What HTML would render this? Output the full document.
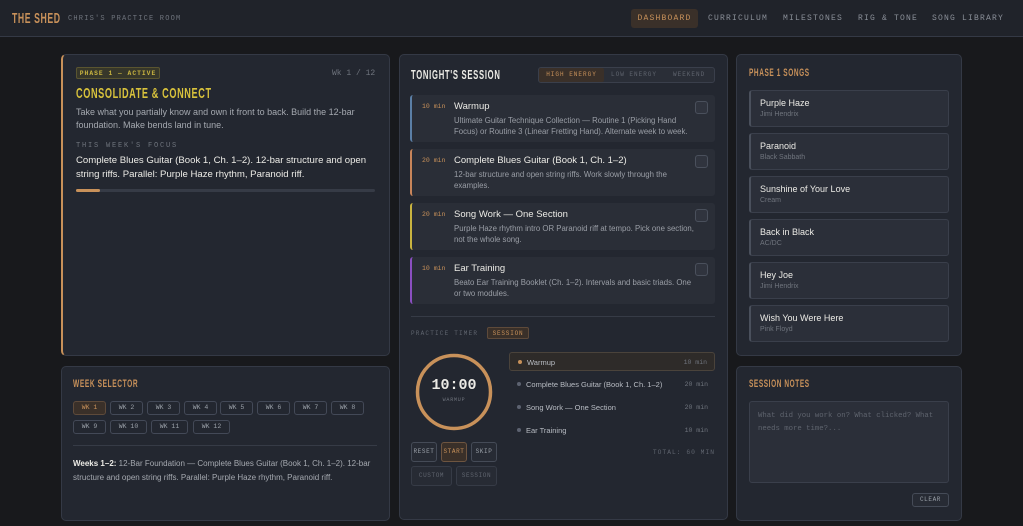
<!DOCTYPE html>
<html><head><meta charset="utf-8"><style>
*{box-sizing:border-box;margin:0;padding:0}
body{width:1023px;height:526px;background:#18191c;font-family:"Liberation Sans",sans-serif;position:relative;overflow:hidden;color:#e8e6e0}
.a{position:absolute}
.mono{font-family:"Liberation Mono",monospace}
.cond{font-family:"Liberation Sans",sans-serif;font-weight:bold;letter-spacing:.6px;transform:scaleX(.6);transform-origin:0 0;white-space:nowrap}
.card{position:absolute;background:#232730;border:1px solid #343945;border-radius:5px}
.hdr{position:absolute;left:0;top:0;width:1023px;height:37px;background:#20232a;border-bottom:1px solid #343945}
.nav{position:absolute;top:9px;height:19px;line-height:19px;font-size:8px;letter-spacing:1.2px;color:#8a8f98;font-family:"Liberation Mono",monospace}
.item{position:absolute;left:410px;width:305px;height:47px;background:#2a2e37;border-radius:3px}
.item .t{position:absolute;left:42px;top:6px;font-size:9.5px;color:#ecebe6}
.item .m{position:absolute;left:10px;top:8px;font-size:6.5px;color:#c8915a;font-family:"Liberation Mono",monospace}
.item .d{position:absolute;left:42px;top:20px;width:240px;font-size:7.8px;line-height:11px;color:#9a9ea6}
.item .c{position:absolute;left:283px;top:6px;width:13px;height:13px;border:1px solid #4a505c;border-radius:3px;background:#30343e}
.wk{position:absolute;height:14px;line-height:12px;border:1px solid #434957;border-radius:3px;font-size:6.5px;color:#9aa0a8;text-align:center;font-family:"Liberation Mono",monospace}
.song{position:absolute;left:749px;width:200px;height:37px;background:#2b2f39;border:1px solid #3a3f4b;border-left:2px solid #4a505c;border-radius:3px}
.song .n{position:absolute;left:9px;top:7px;font-size:9px;color:#ecebe6}
.song .r{position:absolute;left:9px;top:20px;font-size:7px;color:#6f747d}
.btn{position:absolute;border:1px solid #454b57;border-radius:3px;font-size:6px;letter-spacing:.6px;color:#9aa0a8;text-align:center;font-family:"Liberation Mono",monospace;background:#272b34}
.li{position:absolute;left:509px;width:206px;height:19px;font-size:7.5px;color:#b8bcc3}
.li .dot{position:absolute;left:8px;top:7px;width:4px;height:4px;border-radius:2px;background:#5c6270}
.li .x{position:absolute;left:17px;top:5px}
.li .mm{position:absolute;right:7px;top:6px;font-size:6.5px;color:#6f747d;font-family:"Liberation Mono",monospace}
</style></head><body>
<div class="hdr">
 <div class="a cond" style="left:12px;top:10px;font-size:15px;color:#c8915a;letter-spacing:1px;transform:scaleX(.58)">THE SHED</div>
 <div class="a mono" style="left:68px;top:15px;font-size:7px;color:#6f747d;letter-spacing:1.2px">CHRIS'S PRACTICE ROOM</div>
 <div class="nav" style="left:631px;width:67px;background:#3a3029;border-radius:3px;color:#c8915a;text-align:center">DASHBOARD</div>
 <div class="nav" style="left:708px">CURRICULUM</div>
 <div class="nav" style="left:783px">MILESTONES</div>
 <div class="nav" style="left:858px">RIG &amp; TONE</div>
 <div class="nav" style="left:932px">SONG LIBRARY</div>
</div>

<!-- card 1 -->
<div class="card" style="left:61px;top:54px;width:329px;height:302px;border-left:2px solid #c8915a"></div>
<div class="a mono" style="left:76px;top:67px;width:84px;height:12px;line-height:11px;background:#37372a;border:1px solid #5a5530;border-radius:2px;font-size:6.3px;color:#c9b440;letter-spacing:1px;text-align:center;font-weight:bold">PHASE 1 — ACTIVE</div>
<div class="a mono" style="left:332px;top:69px;font-size:8px;color:#6f747d">Wk 1 / 12</div>
<div class="a cond" style="left:76px;top:85px;font-size:15px;color:#d8c23c;letter-spacing:1px;transform:scaleX(.61)">CONSOLIDATE &amp; CONNECT</div>
<div class="a" style="left:76px;top:106px;width:305px;font-size:9px;line-height:13px;color:#a5a9b0">Take what you partially know and own it front to back. Build the 12-bar foundation. Make bends land in tune.</div>
<div class="a mono" style="left:76px;top:142px;font-size:7px;color:#6f747d;letter-spacing:1.8px">THIS WEEK'S FOCUS</div>
<div class="a" style="left:76px;top:154px;width:305px;font-size:9.6px;line-height:14px;color:#ecebe6">Complete Blues Guitar (Book 1, Ch. 1–2). 12-bar structure and open string riffs. Parallel: Purple Haze rhythm, Paranoid riff.</div>
<div class="a" style="left:76px;top:189px;width:299px;height:3px;background:#363b46;border-radius:2px"></div>
<div class="a" style="left:76px;top:189px;width:24px;height:3px;background:#c8915a;border-radius:2px"></div>

<!-- week selector -->
<div class="card" style="left:61px;top:366px;width:329px;height:155px"></div>
<div class="a cond" style="left:73px;top:378px;font-size:11px;color:#c8915a;letter-spacing:1px;transform:scaleX(.6)">WEEK SELECTOR</div>
<div class="wk" style="left:73px;top:401px;width:33px;background:#3a3029;border-color:#5e4a3a;color:#c8915a">WK 1</div>
<div class="wk" style="left:110px;top:401px;width:33px">WK 2</div>
<div class="wk" style="left:147px;top:401px;width:33px">WK 3</div>
<div class="wk" style="left:184px;top:401px;width:33px">WK 4</div>
<div class="wk" style="left:220px;top:401px;width:33px">WK 5</div>
<div class="wk" style="left:257px;top:401px;width:33px">WK 6</div>
<div class="wk" style="left:294px;top:401px;width:33px">WK 7</div>
<div class="wk" style="left:331px;top:401px;width:33px">WK 8</div>
<div class="wk" style="left:73px;top:420px;width:33px">WK 9</div>
<div class="wk" style="left:110px;top:420px;width:37px">WK 10</div>
<div class="wk" style="left:151px;top:420px;width:37px">WK 11</div>
<div class="wk" style="left:193px;top:420px;width:37px">WK 12</div>
<div class="a" style="left:73px;top:445px;width:304px;height:1px;background:#363b46"></div>
<div class="a" style="left:73px;top:457px;width:305px;font-size:8px;line-height:13.5px;color:#a5a9b0"><b style="color:#ecebe6">Weeks 1–2:</b> 12-Bar Foundation — Complete Blues Guitar (Book 1, Ch. 1–2). 12-bar structure and open string riffs. Parallel: Purple Haze rhythm, Paranoid riff.</div>

<!-- middle -->
<div class="card" style="left:399px;top:54px;width:329px;height:466px"></div>
<div class="a cond" style="left:411px;top:67px;font-size:13px;color:#ecebe6;letter-spacing:1.2px;transform:scaleX(.59)">TONIGHT'S SESSION</div>
<div class="a" style="left:538px;top:67px;width:177px;height:16px;background:#2a2e37;border:1px solid #3a3f4b;border-radius:3px"></div>
<div class="a mono" style="left:539px;top:68px;width:65px;height:14px;line-height:14px;background:#3a3029;color:#c8915a;font-size:6px;letter-spacing:1px;text-align:center;border-radius:2px">HIGH ENERGY</div>
<div class="a mono" style="left:611px;top:71px;font-size:6px;color:#5f646e;letter-spacing:1px">LOW ENERGY</div>
<div class="a mono" style="left:673px;top:71px;font-size:6px;color:#5f646e;letter-spacing:1px">WEEKEND</div>

<div class="item" style="top:95px;border-left:2px solid #5b7fa6"><div class="m">10 min</div><div class="t">Warmup</div><div class="d">Ultimate Guitar Technique Collection — Routine 1 (Picking Hand Focus) or Routine 3 (Linear Fretting Hand). Alternate week to week.</div><div class="c"></div></div>
<div class="item" style="top:149px;border-left:2px solid #c8855a"><div class="m">20 min</div><div class="t">Complete Blues Guitar (Book 1, Ch. 1–2)</div><div class="d">12-bar structure and open string riffs. Work slowly through the examples.</div><div class="c"></div></div>
<div class="item" style="top:203px;border-left:2px solid #c9b440"><div class="m">20 min</div><div class="t">Song Work — One Section</div><div class="d">Purple Haze rhythm intro OR Paranoid riff at tempo. Pick one section, not the whole song.</div><div class="c"></div></div>
<div class="item" style="top:257px;border-left:2px solid #8a4fc0"><div class="m">10 min</div><div class="t">Ear Training</div><div class="d">Beato Ear Training Booklet (Ch. 1–2). Intervals and basic triads. One or two modules.</div><div class="c"></div></div>

<div class="a" style="left:411px;top:316px;width:304px;height:1px;background:#363b46"></div>
<div class="a mono" style="left:411px;top:330px;font-size:6px;color:#5f646e;letter-spacing:1.2px">PRACTICE TIMER</div>
<div class="a mono" style="left:487px;top:327px;width:42px;height:12px;line-height:11px;background:#3a3029;border:1px solid #5e4a3a;border-radius:2px;font-size:6px;color:#c8915a;letter-spacing:.8px;text-align:center">SESSION</div>
<svg class="a" style="left:415px;top:353px" width="78" height="78"><circle cx="39" cy="39" r="36.5" fill="none" stroke="#c8915a" stroke-width="3.5"/></svg>
<div class="a mono" style="left:415px;top:377px;width:78px;text-align:center;font-size:15px;font-weight:bold;color:#ecebe6">10:00</div>
<div class="a mono" style="left:415px;top:397px;width:78px;text-align:center;font-size:5px;color:#6f747d;letter-spacing:.8px">WARMUP</div>
<div class="btn" style="left:411px;top:442px;width:26px;height:20px;line-height:18px">RESET</div>
<div class="btn" style="left:441px;top:442px;width:26px;height:20px;line-height:18px;background:#3a3029;border-color:#6e5540;color:#c8915a">START</div>
<div class="btn" style="left:471px;top:442px;width:26px;height:20px;line-height:18px">SKIP</div>
<div class="btn" style="left:411px;top:466px;width:41px;height:20px;line-height:18px;color:#5f646e;border-color:#363b46">CUSTOM</div>
<div class="btn" style="left:456px;top:466px;width:41px;height:20px;line-height:18px;color:#5f646e;border-color:#363b46">SESSION</div>

<div class="li" style="top:352px;background:#2e2b29;border:1px solid #4a433b;border-radius:3px"><div class="dot" style="background:#c8915a"></div><div class="x">Warmup</div><div class="mm">10 min</div></div>
<div class="li" style="top:375px"><div class="dot"></div><div class="x">Complete Blues Guitar (Book 1, Ch. 1–2)</div><div class="mm">20 min</div></div>
<div class="li" style="top:398px"><div class="dot"></div><div class="x">Song Work — One Section</div><div class="mm">20 min</div></div>
<div class="li" style="top:421px"><div class="dot"></div><div class="x">Ear Training</div><div class="mm">10 min</div></div>
<div class="a mono" style="left:640px;top:449px;width:75px;text-align:right;font-size:6.3px;color:#5f646e;letter-spacing:1px">TOTAL: 60 MIN</div>

<!-- right -->
<div class="card" style="left:736px;top:54px;width:226px;height:302px"></div>
<div class="a cond" style="left:749px;top:67px;font-size:11px;color:#c8915a;letter-spacing:1px;transform:scaleX(.59)">PHASE 1 SONGS</div>
<div class="song" style="top:90px"><div class="n">Purple Haze</div><div class="r">Jimi Hendrix</div></div>
<div class="song" style="top:133px"><div class="n">Paranoid</div><div class="r">Black Sabbath</div></div>
<div class="song" style="top:176px"><div class="n">Sunshine of Your Love</div><div class="r">Cream</div></div>
<div class="song" style="top:219px"><div class="n">Back in Black</div><div class="r">AC/DC</div></div>
<div class="song" style="top:262px"><div class="n">Hey Joe</div><div class="r">Jimi Hendrix</div></div>
<div class="song" style="top:305px"><div class="n">Wish You Were Here</div><div class="r">Pink Floyd</div></div>

<div class="card" style="left:736px;top:366px;width:226px;height:155px"></div>
<div class="a cond" style="left:749px;top:378px;font-size:11px;color:#c8915a;letter-spacing:1px;transform:scaleX(.59)">SESSION NOTES</div>
<div class="a mono" style="left:749px;top:401px;width:200px;height:82px;background:#2b2f39;border:1px solid #3a3f4b;border-radius:3px;padding:8px 8px;font-size:7.3px;line-height:12.5px;color:#5f646e">What did you work on? What clicked? What needs more time?...</div>
<div class="btn" style="left:912px;top:493px;width:37px;height:14px;line-height:12px;font-size:6px">CLEAR</div>
</body></html>
